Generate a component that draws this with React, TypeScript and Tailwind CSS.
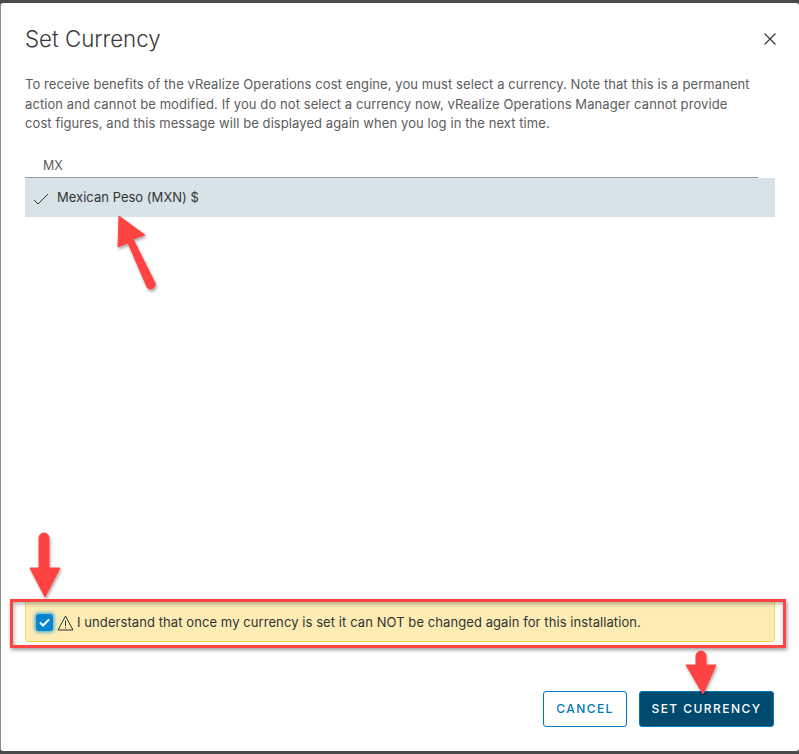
const font = "[font-family:Inter,'Liberation_Sans',sans-serif]"

function Arrows() {
  return (
    <svg className="absolute inset-0 pointer-events-none" width="799" height="754" viewBox="0 0 799 754">
      <defs>
        <filter id="arrow-shadow" x="-30%" y="-30%" width="160%" height="160%">
          <feDropShadow dx="1" dy="2" stdDeviation="1.5" floodColor="#000" floodOpacity="0.35" />
        </filter>
      </defs>
      <g filter="url(#arrow-shadow)" fill="#ff4343" stroke="#ff4343">
        <path d="M119 216 L145 235 L133 239 L155 283 A4.5 4.5 0 0 1 147 287 L128 243 L118 247 Z" strokeWidth="1" />
        <path d="M39 538 A5 5 0 0 1 49 538 L49 568 L60 568 L45 597 L30 568 L39 568 Z" strokeWidth="1" />
        <path d="M696 656 A5 5 0 0 1 706 656 L706 665 L716 665 L703 694 L686 665 L696 665 Z" strokeWidth="1" />
      </g>
    </svg>
  )
}

export default function App() {
  return (
    <div className={`relative w-[799px] h-[754px] overflow-hidden bg-[#4a4a4a] pt-[3px] pb-[3px] ${font}`}>
      <div className="flex h-full flex-col rounded-[3px] border-l border-[#8c8c8c] bg-white pl-6 pr-6">
        <div className="flex items-center justify-between pt-[21px]">
          <h1 className="text-[22.3px] leading-[30px] font-light text-[#3a3a3a]">Set Currency</h1>
          <svg width="14" height="14" viewBox="0 0 14 14" className="mr-[-2px]" stroke="#333" strokeWidth="1.1" fill="none">
            <path d="M1.5 1.5 L12.5 12.5 M12.5 1.5 L1.5 12.5" />
          </svg>
        </div>

        <p className="mt-[21px] w-[730px] text-[13px] leading-[19.5px] tracking-[0.08px] text-[#5c5c5c]">
          To receive benefits of the vRealize Operations cost engine, you must select a currency. Note that this is a permanent action and cannot be modified. If you do not select a currency now, vRealize Operations Manager cannot provide cost figures, and this message will be displayed again when you log in the next time.
        </p>

        <div className="mt-[20px] mr-[17px] h-[24px] border-b border-[#9a9a9a] pl-[18px] pt-[3px] text-[12.5px] leading-[17px] text-[#5c5c5c]">MX</div>

        <div className="flex h-[39px] items-center bg-[#d8e3e9] pt-px">
          <svg width="16" height="12" viewBox="0 0 16 12" className="ml-2 mt-[3px]" stroke="#333" strokeWidth="1" fill="none">
            <path d="M1 7 L5 11 L15 1" />
          </svg>
          <span className="ml-2 text-[13px] tracking-[0.02px] text-[#333]">Mexican Peso (MXN) $</span>
        </div>

        <div className="flex-1" />

        <div className="flex h-[43px] items-center rounded-[3px] border border-[#efd94f] bg-[#fdecb4] pt-[4px]">
          <span className="ml-[10px] flex h-[17px] w-[17px] items-center justify-center rounded-[3px] bg-[#0a84cf] shadow-[0_0_3px_2px_rgba(73,175,217,0.75)]">
            <svg width="11" height="9" viewBox="0 0 11 9" stroke="#fff" strokeWidth="2" fill="none">
              <path d="M1 4.5 L4 7.5 L10 1.5" />
            </svg>
          </span>
          <svg width="17" height="16" viewBox="0 0 17 16" className="ml-[4px]" stroke="#333" strokeWidth="1" fill="none">
            <path d="M8.5 1 L16 15 L1 15 Z" strokeLinejoin="round" />
            <path d="M8.5 5.5 L8.5 11 M8.5 12.2 L8.5 13.4" />
          </svg>
          <span className="ml-[3px] text-[13px] tracking-[0.08px] text-[#333]">I understand that once my currency is set it can NOT be changed again for this installation.</span>
        </div>

        <div className="mt-[49px] mb-[24px] flex justify-end gap-3 pr-px text-[12px] font-medium tracking-[0.12em]">
          <button className="h-9 w-[84px] rounded-[3px] border border-[#0079b8] bg-white text-[#0079b8]">CANCEL</button>
          <button className="h-9 w-[135px] rounded-[3px] border border-[#0079b8] bg-[#004a70] text-white">SET CURRENCY</button>
        </div>
      </div>

      <div className="absolute left-[10px] top-[599px] h-[49px] w-[776px] border-[3px] border-[#ff4343] shadow-[1px_2px_4px_rgba(0,0,0,0.4),inset_1px_2px_4px_rgba(0,0,0,0.3)]" />
      <Arrows />
    </div>
  )
}
